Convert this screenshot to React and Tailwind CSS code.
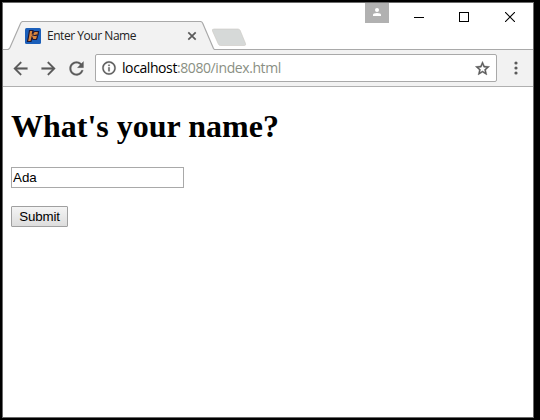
import React from "react";

function Tab() {
  return (
    <div className="relative h-[29px] w-[212px] shrink-0">
      <svg className="absolute left-0 top-0" width="212" height="29" viewBox="0 0 212 29">
        <path d="M0 28.5H4.500Q6 28.5 7 26.500L17.600 2.200Q18.400 .5 20 .5H197.200Q199 .5 199.700 2.200L210.500 27.500Q211 28.500 212 28.500V29H0Z" fill="#f2f2f2" />
        <path d="M0 28.5H4.500Q6 28.5 7 26.500L17.600 2.200Q18.400 .5 20 .5H197.200Q199 .5 199.700 2.200L210.500 27.500Q211 28.500 212 28.500" fill="none" stroke="#a9a9a9" strokeWidth="1.150" />
      </svg>
      <div className="relative flex h-[29px] items-center pl-[22px]">
        <Favicon />
        <span className="ml-[6px] w-[140px] whitespace-nowrap text-[12px] leading-[16px] tracking-[-0.46px] text-[#222]">
          Enter Your Name
        </span>
        <svg width="10" height="10" viewBox="0 0 10 10">
          <path d="M1.300 1.300L8.700 8.700M8.700 1.300L1.300 8.700" stroke="#5a5a5a" strokeWidth="1.700" />
        </svg>
      </div>
    </div>
  );
}

function Favicon() {
  return (
    <svg className="shrink-0" width="16" height="16" viewBox="0 0 16 16">
      <rect width="16" height="16" rx="1.500" fill="#1b5fba" />
      <path d="M4.500 2.500H8L7.500 5L9.500 3.500H13.500L13 7H11.500L12.500 8.500L11.500 11.500H8L7 9.500L6 13.500H2.500L3.500 8.500Z" fill="#d9853b" stroke="#1c1838" strokeWidth="1.200" />
      <path d="M8 4V8M8.500 7.500H11" stroke="#1c1838" strokeWidth="1" />
    </svg>
  );
}

function WindowControls() {
  return (
    <div className="ml-auto flex h-[28px] items-start pr-[18px]">
      <div className="flex h-[20px] w-[24px] justify-center bg-[#b1b1b1] pt-[5px]">
        <svg width="8" height="8" viewBox="0 0 8 8" fill="#fff">
          <circle cx="4" cy="2" r="2" />
          <path d="M0 8V6.800Q0 5 4 5T8 6.800V8Z" />
        </svg>
      </div>
      <svg className="ml-[25px] mt-[9px]" width="10" height="10" viewBox="0 0 10 10" shapeRendering="crispEdges">
        <path d="M0 5.500H10" stroke="#000" />
      </svg>
      <svg className="ml-[35px] mt-[9px]" width="10" height="10" viewBox="0 0 10 10" shapeRendering="crispEdges">
        <rect x=".5" y=".5" width="9" height="9" fill="none" stroke="#000" />
      </svg>
      <svg className="ml-[36px] mt-[9px]" width="10" height="10" viewBox="0 0 10 10">
        <path d="M0 0L10 10M10 0L0 10" stroke="#000" strokeWidth="1.100" />
      </svg>
    </div>
  );
}

function ToolIcon({ d, size = 21, weight = 0.15 }) {
  return (
    <svg className="shrink-0" width={size} height={size} viewBox="0 0 24 24" fill="#5a5a5a" stroke="#5a5a5a" strokeWidth={weight}>
      <path d={d} />
    </svg>
  );
}

function Toolbar() {
  return (
    <div className="flex h-[37px] items-center border-b border-[#b0b0b0] bg-[#f2f2f2] pl-[7px]">
      <div className="flex w-[85px] gap-[7px]">
        <ToolIcon d="M20 10.9H8.030l5.490-5.490L12 4l-8 8 8 8 1.410-1.410L8.030 13.100H20v-2.200z" />
        <ToolIcon d="M4 10.900h11.970l-5.490-5.490L12 4l8 8-8 8-1.410-1.410 5.380-5.490H4v-2.200z" />
        <ToolIcon weight={0.3} d="M17.650 6.350C16.200 4.900 14.210 4 12 4c-4.420 0-7.990 3.580-7.990 8s3.570 8 7.990 8c3.730 0 6.840-2.550 7.730-6h-2.080c-.82 2.330-3.040 4-5.650 4-3.310 0-6-2.690-6-6s2.690-6 6-6c1.660 0 3.140.69 4.220 1.780L13 11h7V4l-2.350 2.350z" />
      </div>
      <div className="flex h-[28px] w-[402px] items-center rounded-[2px] border border-[#a9a9a9] bg-white px-[5px]">
        <ToolIcon size={16} weight={0.4} d="M11 17h2v-6h-2v6zm1-15C6.480 2 2 6.480 2 12s4.480 10 10 10 10-4.480 10-10S17.520 2 12 2zm0 18c-4.410 0-8-3.590-8-8s3.590-8 8-8 8 3.590 8 8-3.590 8-8 8zM11 9h2V7h-2v2z" />
        <span className="ml-[5px] flex-1 whitespace-nowrap text-[14px] leading-[20px] tracking-[-0.41px] text-[#8a8f83]">
          <span className="text-black">localhost</span>:8080/index.html
        </span>
        <ToolIcon size={17} weight={0.6} d="M22 9.240l-7.190-.62L12 2 9.190 8.630 2 9.240l5.460 4.730L5.820 21 12 17.270 18.180 21l-1.630-7.030L22 9.240zM12 15.400l-3.760 2.270 1-4.280-3.320-2.880 4.380-.38L12 6.100l1.710 4.040 4.380.38-3.320 2.880 1 4.280L12 15.400z" />
      </div>
      <svg className="ml-[16.500px]" width="4" height="14" viewBox="0 0 4 14" fill="#5a5a5a">
        <circle cx="2" cy="2" r="1.600" />
        <circle cx="2" cy="7" r="1.600" />
        <circle cx="2" cy="12" r="1.600" />
      </svg>
    </div>
  );
}

export default function App() {
  return (
    <div className="h-[420px] w-[540px] overflow-hidden bg-black pl-[2px] pt-[2px]">
      <div className="flex h-[416px] w-[532px] flex-col border border-[#6b6b6b] bg-white font-['Open_Sans','Noto_Sans',sans-serif]">
        <div className="flex h-[47px] shrink-0 items-end border-b border-[#a9a9a9]">
          <div className="-mb-px flex h-[47px] w-full items-end">
            <Tab />
            <svg className="-ml-[4px] mb-[3px]" width="36" height="19" viewBox="0 0 36 19">
              <path d="M3 1H27Q28.500 1 29.200 2.500L34.500 15.500Q35.200 17.500 33.500 17.500H9.500Q8 17.500 7.300 16L1.500 3Q.7 1 3 1Z" fill="#d6d9d8" stroke="#cbc8c2" strokeWidth=".6" />
            </svg>
            <div className="flex h-full flex-1 items-start">
              <WindowControls />
            </div>
          </div>
        </div>
        <Toolbar />
        <main className="flex flex-col items-start px-[8px] pt-[21px] text-black">
          <h1 className="whitespace-nowrap font-['Liberation_Serif',serif] text-[32px] font-bold leading-[37px]">
            What's your name?
          </h1>
          <input
            type="text"
            defaultValue="Ada"
            className="mt-[22px] h-[21px] w-[173px] border border-[#a9a9a9] bg-white px-px font-['Liberation_Sans',sans-serif] text-[13.333px] leading-[15px] outline-none"
          />
          <button className="mt-[18px] h-[21px] w-[57px] rounded-[1px] border border-[#a0a0a0] bg-linear-to-b from-[#f4f4f4] to-[#dddddd] font-['Liberation_Sans',sans-serif] text-[13.333px] leading-[15px] tracking-[-0.15px]">
            Submit
          </button>
        </main>
      </div>
    </div>
  );
}
